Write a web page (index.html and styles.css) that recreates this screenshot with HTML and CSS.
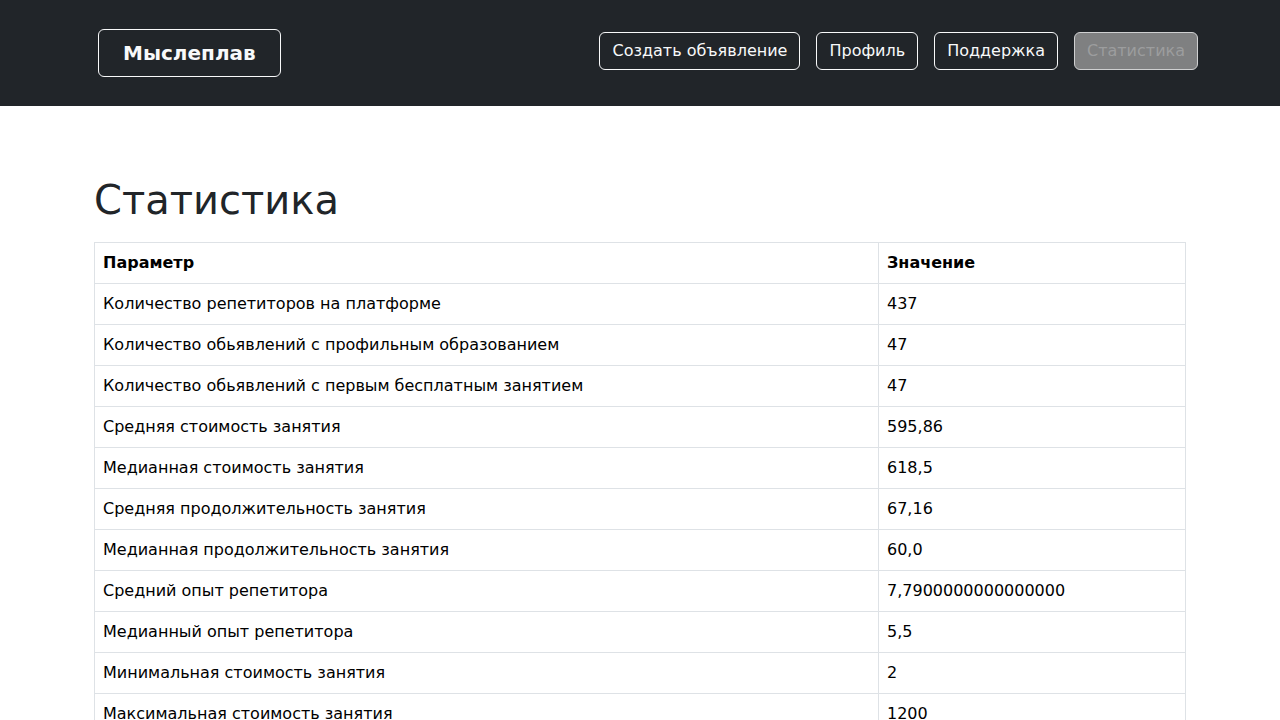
FILE: index.html
```html
<!DOCTYPE html>
<html lang="ru">
<head>
<meta charset="utf-8">
<title>Статистика — Мыслеплав</title>
<link rel="stylesheet" href="styles.css">
</head>
<body>
<header class="topbar">
  <div class="container topbar-inner">
    <a class="brand" href="#">Мыслеплав</a>
    <nav class="nav">
      <a class="nav-btn" href="#">Создать объявление</a>
      <a class="nav-btn" href="#">Профиль</a>
      <a class="nav-btn" href="#">Поддержка</a>
      <a class="nav-btn active" href="#">Статистика</a>
    </nav>
  </div>
</header>
<main class="container main">
  <div class="content">
    <h1 class="title">Статистика</h1>
    <table class="stats">
      <thead>
        <tr><th class="col-param">Параметр</th><th>Значение</th></tr>
      </thead>
      <tbody>
        <tr><td>Количество репетиторов на платформе</td><td>437</td></tr>
        <tr><td>Количество обьявлений с профильным образованием</td><td>47</td></tr>
        <tr><td>Количество обьявлений с первым бесплатным занятием</td><td>47</td></tr>
        <tr><td>Средняя стоимость занятия</td><td>595,86</td></tr>
        <tr><td>Медианная стоимость занятия</td><td>618,5</td></tr>
        <tr><td>Средняя продолжительность занятия</td><td>67,16</td></tr>
        <tr><td>Медианная продолжительность занятия</td><td>60,0</td></tr>
        <tr><td>Средний опыт репетитора</td><td>7,7900000000000000</td></tr>
        <tr><td>Медианный опыт репетитора</td><td>5,5</td></tr>
        <tr><td>Минимальная стоимость занятия</td><td>2</td></tr>
        <tr><td>Максимальная стоимость занятия</td><td>1200</td></tr>
      </tbody>
    </table>
  </div>
</main>
</body>
</html>
```
FILE: styles.css
```css
* { box-sizing: border-box; }
html, body {
  margin: 0;
  padding: 0;
}
body {
  font-family: "DejaVu Sans", "Liberation Sans", sans-serif;
  font-size: 16px;
  line-height: 1.5;
  color: #212529;
  background: #fff;
}
.container {
  max-width: 1140px;
  margin: 0 auto;
  padding: 0 12px;
}
.topbar {
  background: #212529;
  height: 106px;
}
.topbar-inner {
  display: flex;
  justify-content: space-between;
  align-items: flex-start;
  padding-top: 29px;
}
.brand {
  display: inline-block;
  margin-left: 16px;
  padding: 8px 24px;
  font-size: 20px;
  line-height: 30px;
  font-weight: 700;
  color: #f8f9fa;
  text-decoration: none;
  border: 1px solid #f8f9fa;
  border-radius: 6px;
}
.nav {
  display: flex;
  gap: 16px;
  margin-top: 3px;
}
.nav-btn {
  display: inline-block;
  padding: 6px 12px;
  font-size: 16px;
  line-height: 24px;
  color: #f8f9fa;
  text-decoration: none;
  border: 1px solid #f8f9fa;
  border-radius: 6px;
}
.nav-btn.active {
  background: #7f8081;
  color: #9c9d9e;
  border-color: #cfd0d1;
}
.main {
  padding-top: 70px;
}
.content {
  padding: 0 12px;
}
.title {
  margin: 0 0 18px;
  font-size: 40px;
  line-height: 48px;
  font-weight: 500;
}
.stats {
  width: 100%;
  border-collapse: collapse;
  color: #000;
}
.stats th, .stats td {
  border: 1px solid #dee2e6;
  padding: 8px;
  text-align: left;
  vertical-align: top;
}
.stats th {
  font-weight: 700;
}
.col-param {
  width: 784px;
}
```
